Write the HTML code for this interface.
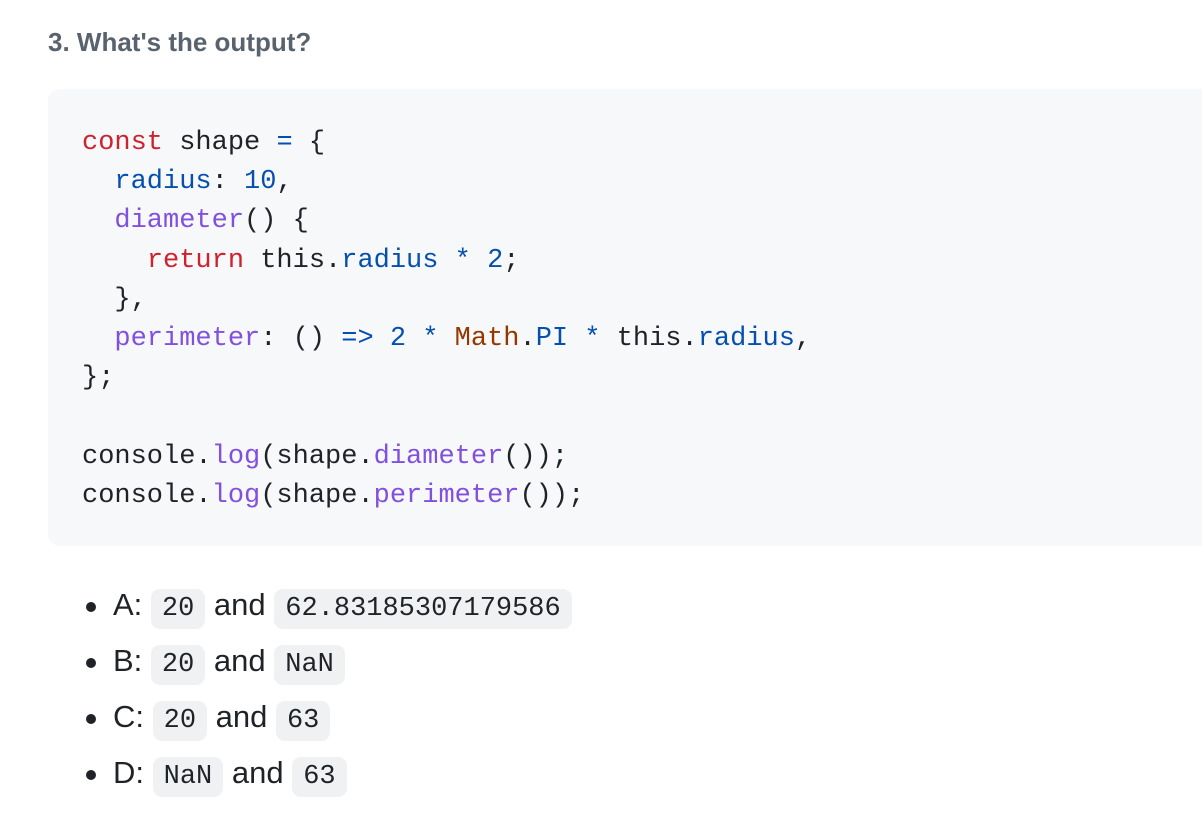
<!DOCTYPE html>
<html><head><meta charset="utf-8"><style>
html,body{margin:0;padding:0;background:#fff;width:1202px;height:824px;overflow:hidden}
body{font-family:"Liberation Sans",Helvetica,Arial,sans-serif;color:#1f2328}
h3{position:absolute;left:48px;top:22px;margin:0;font-size:26px;font-weight:bold;color:#59636e;line-height:40px}
.pre{position:absolute;left:48px;top:89px;width:1180px;height:457px;margin:0;background:#f6f8fa;border-radius:12px;box-sizing:border-box;padding:35px 0 0 34px;
font-family:"Liberation Mono","DejaVu Sans Mono",monospace;font-size:27px;line-height:39.2px;color:#1f2328;white-space:pre}
.k{color:#cf222e}.c{color:#0550ae}.f{color:#8250df}.m{color:#953800}
ul{position:absolute;left:0;top:582px;margin:0;padding:0;list-style:none}
li{position:relative;height:56px;font-size:31px;line-height:46px;padding-left:113px}
li:before{content:"";position:absolute;left:86px;top:20px;width:10px;height:10px;border-radius:50%;background:#1f2328}
.p{font-family:"Liberation Mono","DejaVu Sans Mono",monospace;font-size:27px;background:#eff1f3;border-radius:9px;padding:5px 11px;margin:0}
</style></head><body>
<h3>3. What's the output?</h3>
<div class="pre"><span class="k">const</span> shape <span class="c">=</span> {
  <span class="c">radius</span>: <span class="c">10</span>,
  <span class="f">diameter</span>() {
    <span class="k">return</span> this.<span class="c">radius</span> <span class="c">*</span> <span class="c">2</span>;
  },
  <span class="f">perimeter</span>: () <span class="c">=&gt;</span> <span class="c">2</span> <span class="c">*</span> <span class="m">Math</span>.<span class="c">PI</span> <span class="c">*</span> this.<span class="c">radius</span>,
};

console.<span class="f">log</span>(shape.<span class="f">diameter</span>());
console.<span class="f">log</span>(shape.<span class="f">perimeter</span>());</div>
<ul>
<li>A: <span class="p">20</span> and <span class="p">62.83185307179586</span></li>
<li>B: <span class="p">20</span> and <span class="p">NaN</span></li>
<li>C: <span class="p">20</span> and <span class="p">63</span></li>
<li>D: <span class="p">NaN</span> and <span class="p">63</span></li>
</ul>
</body></html>
